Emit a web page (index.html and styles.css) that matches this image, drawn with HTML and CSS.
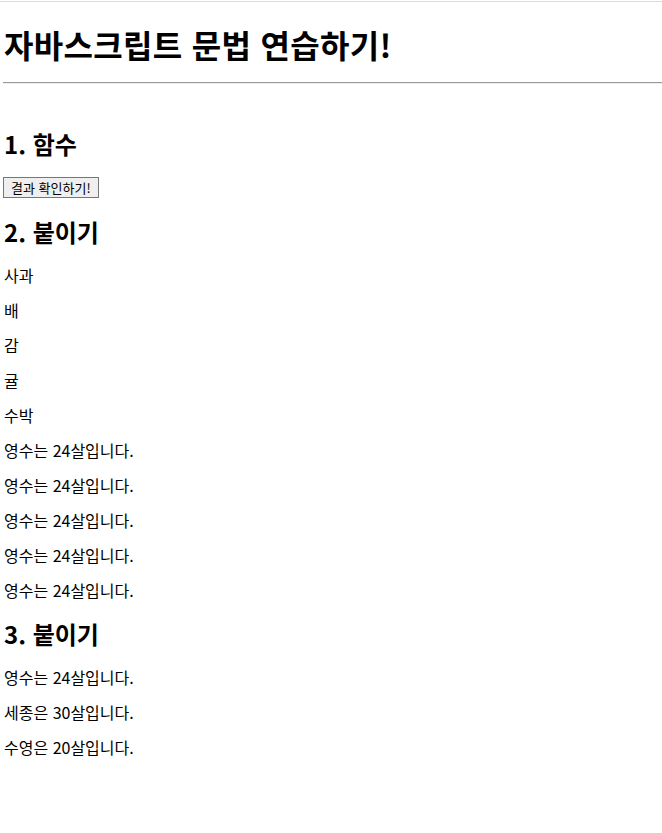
FILE: index.html
```html
<!DOCTYPE html>
<html lang="ko">
<head>
<meta charset="utf-8">
<title>자바스크립트 문법 연습하기!</title>
<link rel="stylesheet" href="styles.css">
</head>
<body>
<div class="page">
  <h1 class="title">자바스크립트 문법 연습하기!</h1>
  <hr class="rule">
  <h2 class="section first">1. 함수</h2>
  <div class="actions"><button class="btn" type="button">결과 확인하기!</button></div>
  <h2 class="section">2. 붙이기</h2>
  <p class="line">사과</p>
  <p class="line">배</p>
  <p class="line">감</p>
  <p class="line">귤</p>
  <p class="line">수박</p>
  <p class="line">영수는 24살입니다.</p>
  <p class="line">영수는 24살입니다.</p>
  <p class="line">영수는 24살입니다.</p>
  <p class="line">영수는 24살입니다.</p>
  <p class="line">영수는 24살입니다.</p>
  <h2 class="section">3. 붙이기</h2>
  <p class="line">영수는 24살입니다.</p>
  <p class="line">세종은 30살입니다.</p>
  <p class="line">수영은 20살입니다.</p>
</div>
</body>
</html>
```

FILE: styles.css
```css
html {
  margin: 0;
  padding: 0;
  background: #ffffff;
}
body {
  margin: 0;
  padding-top: 1px;
  font-family: "Noto Sans CJK KR", "Noto Sans", sans-serif;
  color: #000000;
}
.page {
  border-top: 1px solid #dddddd;
  padding: 0 0 40px 4px;
}
.title {
  font-size: 32px;
  font-weight: bold;
  line-height: 38px;
  margin: 23px 0 0 0;
  letter-spacing: 0.3px;
}
.rule {
  margin: 19px 0 0 -1px;
  border: 0;
  border-top: 1px solid #9a9a9a;
  border-bottom: 1px solid #eeeeee;
  height: 0;
}
.section {
  font-size: 24px;
  font-weight: bold;
  line-height: 28px;
  margin: 20px 0 20px 0;
}
.section.first {
  margin-top: 46px;
  margin-bottom: 19px;
}
.actions {
  display: flex;
  margin-left: -1px;
  margin-bottom: 17px;
}
.btn {
  font-family: "Noto Sans CJK KR", "Noto Sans", sans-serif;
  font-size: 13px;
  line-height: 17px;
  padding: 1px 7px;
  border: 1px solid #767676;
  border-radius: 0;
  background: #efefef;
  color: #000000;
}
.line {
  font-size: 16px;
  line-height: 19px;
  margin: 16px 0;
}
.section + .line {
  margin-top: 20px;
}
```
